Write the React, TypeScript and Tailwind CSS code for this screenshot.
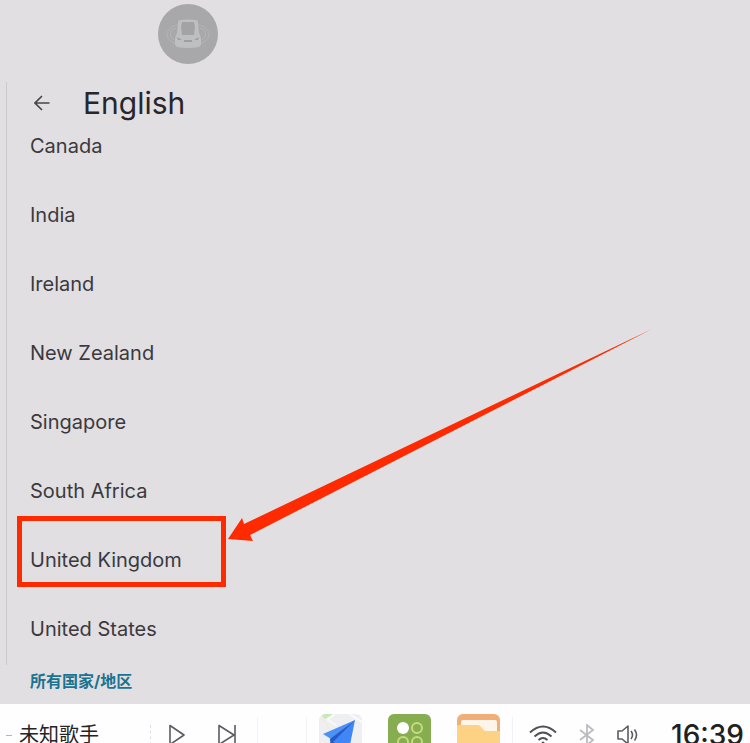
import React from "react";

const countries: string[] = [
    "Canada",
    "India",
    "Ireland",
    "New Zealand",
    "Singapore",
    "South Africa",
    "United Kingdom",
    "United States",
];

const CarIcon = () => (
    <svg viewBox="0 0 60 60" className="w-[60px] h-[60px]" aria-hidden="true">
        <circle cx="30" cy="30" r="30" fill="#a8a7aa" />
        <g fill="none" stroke="#b5b6b8" strokeWidth="1">
            <path d="M19 21C6 24 6 36 17 39M41 21c13 3 13 15 2 18" />
            <path d="M18 24c-7 2-7 9-2 12M42 24c7 2 7 9 2 12" />
        </g>
        <path
            d="M22 16q8-1 16 0 2 0 2 2l1 11q2 3 2 6v5q0 2-2 3-4 1-11 1t-11-1q-2-1-2-3v-5q0-3 2-6l1-11q0-2 2-2z"
            fill="#bdbfc1"
        />
        <path d="M24 18h12l1 5-1 8H24l-1-8z" fill="#a3a3a6" />
        <path d="M19 33l5 3h-4zM41 33l-5 3h4zM26 36h8v2h-8z" fill="#9c9ea1" />
    </svg>
)

const BackIcon = () => (
    <svg viewBox="0 0 16 16" className="w-4 h-4" fill="none" stroke="#48464a" strokeWidth="1.6">
        <path d="M15.5 8H1M8 1L1 8l7 7" />
    </svg>
)

const Arrow = () => (
    <svg viewBox="0 0 424 212" className="w-[424px] h-[212px]" fill="#ff2a00" aria-hidden="true">
        <path d="M424 0L16 195l-2-6L0 210l25 2-3-6z" />
    </svg>
)

const MapIcon = () => (
    <svg viewBox="0 0 43 43" className="w-[43px] h-[43px]" aria-hidden="true">
        <rect width="43" height="43" rx="6" fill="#eeeff0" />
        <path d="M3 2Q4 0 7 0h7L6 5z" fill="#c5ebb4" />
        <path d="M8 5l10 7M8 6l8-6M30 0l13 8" stroke="#fafafa" strokeWidth="2" />
        <path d="M3 4l8 12" stroke="#f5ecc4" strokeWidth="1" />
        <path d="M36 6L4 20l8 5z" fill="#4c91f5" />
        <path d="M36 6L11 25l1 11 8-7z" fill="#2459c6" />
        <path d="M36 6L14 28l16 8z" fill="#3f86f6" />
    </svg>
)

const AppsIcon = () => (
    <svg viewBox="0 0 43 43" className="w-[43px] h-[43px]" aria-hidden="true">
        <rect width="43" height="43" rx="6" fill="#86ae50" />
        <circle cx="15" cy="14" r="6" fill="#fff" />
        <g fill="none" stroke="#c6dc7c" strokeWidth="2">
            <circle cx="29" cy="14" r="5" />
            <circle cx="15" cy="28" r="5" />
            <circle cx="29" cy="28" r="5" />
        </g>
    </svg>
)

const FolderIcon = () => (
    <svg viewBox="0 0 43 43" className="w-[43px] h-[43px]" aria-hidden="true">
        <rect width="43" height="43" rx="6" fill="#f2ae74" />
        <path d="M4 8q0-2 2-2h32q2 0 2 2v14H4z" fill="#fdf5ea" />
        <path d="M0 12q0-1 2-1h19q2 0 3 2l2 2q1 2 3 2h14v20q0 6-6 6H6q-6 0-6-6z" fill="#fed285" />
    </svg>
)

const PlayIcon = () => (
    <svg viewBox="0 0 18 22" className="w-[18px] h-[22px]" fill="none" stroke="#5c5c5f" strokeWidth="1.6" strokeLinejoin="round">
        <path d="M2 1.5v19L16 11z" />
    </svg>
)

const NextIcon = () => (
    <svg viewBox="0 0 18 22" className="w-[18px] h-[22px]" fill="none" stroke="#5c5c5f" strokeWidth="1.6" strokeLinejoin="round">
        <path d="M1 1.5v19L16 11zM17 1v20" />
    </svg>
)

const WifiIcon = () => (
    <svg viewBox="0 0 28 20" className="w-7 h-5" fill="none" stroke="#505053" strokeWidth="1.8">
        <path d="M1 7.500Q14-4.500 27 7.500M5.500 11.500q8.500-8 17 0M9.500 15q4.500-4 9 0" />
        <circle cx="14" cy="18" r="1.500" fill="#505053" stroke="none" />
    </svg>
)

const BluetoothIcon = () => (
    <svg viewBox="0 0 16 22" className="w-4 h-[22px]" fill="none" stroke="#bcbcbf" strokeWidth="1.8">
        <path d="M1 6l13 10-6 5V1l6 5L1 16" />
    </svg>
)

const VolumeIcon = () => (
    <svg viewBox="0 0 22 20" className="w-[22px] h-5" fill="none" stroke="#5c5c5f" strokeWidth="1.6" strokeLinejoin="round">
        <path d="M1 6h4l6-5v18l-6-5H1z" />
        <path d="M14 6q3 4 0 8M17.500 4.500q4 5.500 0 11" />
    </svg>
)

const StatusBar = () => (
    <footer className="flex shrink-0 items-center h-[62px] bg-[#fefdff] overflow-hidden">
        <div className="flex items-center w-[257px] pl-1.5">
            <span className="w-1.5 h-px bg-[#b5b5b8]" />
            <span className="ml-[7px] text-xl leading-6 text-[#242426]">未知歌手</span>
            <span className="ml-auto h-5 border-l border-dashed border-[#dedee1]" />
            <button type="button" aria-label="Play" className="ml-[17px]">
                <PlayIcon />
            </button>
            <button type="button" aria-label="Next" className="ml-8 mr-[21px]">
                <NextIcon />
            </button>
        </div>
        <div className="w-[50px] h-9 border-x border-[#f3f2f5]" />
        <nav className="flex gap-[26px] px-3">
            <button type="button" aria-label="Map"><MapIcon /></button>
            <button type="button" aria-label="Apps"><AppsIcon /></button>
            <button type="button" aria-label="Files"><FolderIcon /></button>
        </nav>
        <div className="flex flex-1 items-center justify-end h-9 pr-1.5 border-l border-[#f3f2f5]">
            <WifiIcon />
            <span className="ml-[22px]"><BluetoothIcon /></span>
            <span className="ml-[22px]"><VolumeIcon /></span>
            <time className="ml-8 text-[28px] leading-8 font-medium text-[#202022]">16:39</time>
        </div>
    </footer>
)

const App = () => {
    return (
        <div className="flex flex-col h-screen overflow-hidden bg-[#e1dfe2] font-[Inter,'Noto_Sans_CJK_SC',sans-serif]">
            <header className="shrink-0 pt-1 pl-[158px] pb-[18px]">
                <CarIcon />
            </header>
            <main className="grow shrink-0 pl-1.5 pb-[11px]">
                <section className="border-l border-[#cbc9cc] pl-[23px] pb-3.5">
                    <div className="flex items-center h-[42px] gap-[33px]">
                        <button type="button" aria-label="Back" className="ml-1">
                            <BackIcon />
                        </button>
                        <h1 className="text-3xl leading-8 text-[#28262a]">English</h1>
                    </div>
                    <ul className="flex flex-col gap-[25px]">
                        {countries.map((name) => (
                            <li key={name} className="relative">
                                <button type="button" className="block w-full h-11 text-left text-xl text-[#3b393d]">
                                    {name}
                                </button>
                                {name == "United Kingdom" &&
                                    <>
                                        <div className="absolute -left-[13px] -top-[22px] w-[209px] h-[71px] border-5 border-[#ff2a00] pointer-events-none" />
                                        <div className="absolute left-[198px] bottom-[41px] pointer-events-none">
                                            <Arrow />
                                        </div>
                                    </>
                                }
                            </li>
                        ))}
                    </ul>
                </section>
                <h2 className="pl-6 pt-1 text-base leading-6 font-bold text-[#1a7391]">所有国家/地区</h2>
            </main>
            <StatusBar />
        </div>
    )
}

export default App
